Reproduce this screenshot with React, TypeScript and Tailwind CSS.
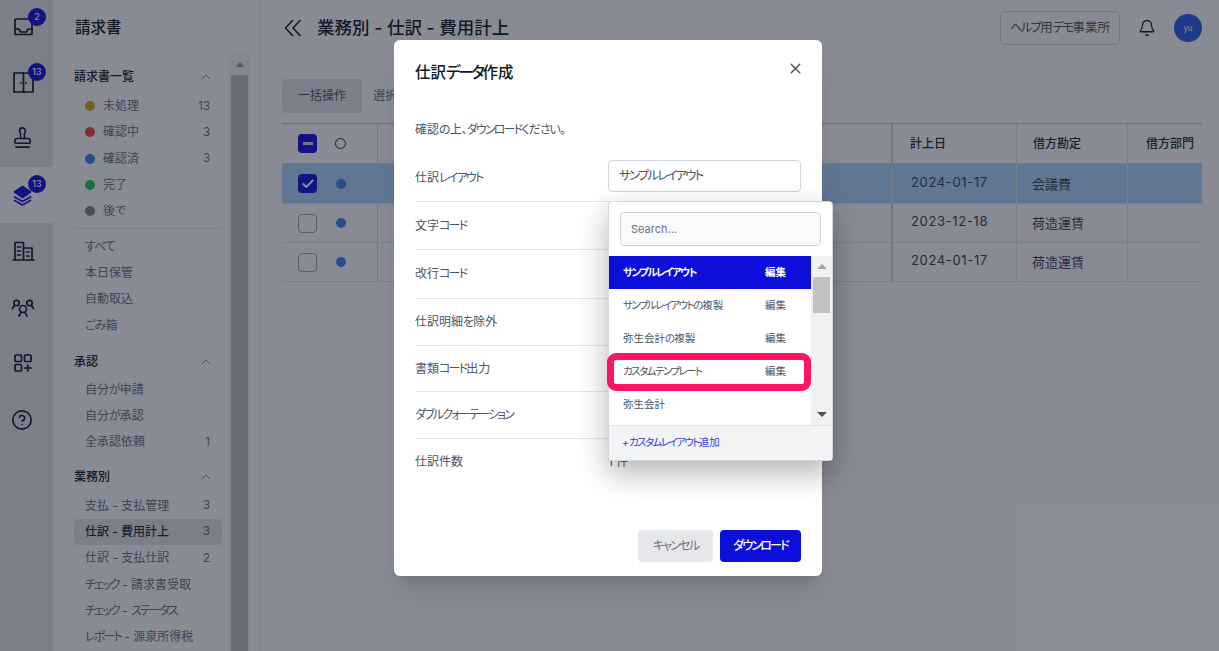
import React from "react";
import { Bell, ChevronUp, CircleHelp, Stamp, X, Check } from "lucide-react";

const T = ({ s }: { s: string }) => (
  <>
    {s.split(/([ァ-ヶー]+|[ぁ-ん、。]+)/).map((p, i) =>
      /^[ァ-ヶー]/.test(p) ? (
        <span key={i} className="tracking-[-0.15em]">{p}</span>
      ) : /^[ぁ-ん、。]/.test(p) ? (
        <span key={i} className="tracking-[-0.08em]">{p}</span>
      ) : (
        <span key={i}>{p}</span>
      )
    )}
  </>
);

const S = (p: { children: React.ReactNode; color?: string }) => (
  <svg width="24" height="24" viewBox="0 0 24 24" fill="none" stroke={p.color ?? "#111827"} strokeWidth="1.7" strokeLinejoin="round" strokeLinecap="round">{p.children}</svg>
);

const rail: { icon: React.ReactNode; badge?: string; active?: boolean; h: string }[] = [
  { h: "h-[55px]", badge: "2", icon: <S><rect x="4" y="3" width="17" height="15.500" rx="1" /><path d="M4 13h4l1.500 3h6l1.500-3h4" /></S> },
  { h: "h-14", badge: "13", icon: <S><rect x="3" y="2" width="19" height="19" /><path d="M12.500 2v19M10 11.500v.5M15 11.500v.5" /></S> },
  { h: "h-14", icon: <Stamp size={23} strokeWidth={1.7} color="#111827" className="-mt-[4px]" /> },
  { h: "h-14", badge: "13", active: true, icon: <S color="#0e0edb"><path d="M11.500 3.500l8 5.500-8 5.500-8-5.500z" fill="#0e0edb" /><path d="M3.500 14l8 4.500 8-4.500M3.500 17.500l8 4.500 8-4.500" /></S> },
  { h: "h-14", icon: <S><path d="M2 21h21M4 21V3.500h8.500V21M12.500 9H21V21M6.500 8h3M6.500 12h3M6.500 16h3M15.500 13h2.500M15.500 17h2.500" /></S> },
  { h: "h-14", icon: <S><circle cx="12" cy="14" r="3.500" /><path d="M8 21l2-3.500M16 21l-2-3.500" /><circle cx="5.500" cy="8" r="2.700" /><circle cx="18.500" cy="8" r="2.700" /><path d="M1.500 13.500l2-3M22.500 13.500l-2-3" /></S> },
  { h: "h-14", icon: <S><rect x="4" y="4" width="6.500" height="6.500" rx="1" /><rect x="13.500" y="4" width="6.500" height="6.500" rx="1" /><rect x="4" y="13.500" width="6.500" height="6.500" rx="1" /><path d="M13.500 17h6.500M16.750 14v6" /></S> },
  { h: "h-14", icon: <CircleHelp size={22} strokeWidth={1.8} color="#111827" className="mt-[2px]" /> },
];

type Item = { t: string; n?: string; dot?: string; active?: boolean };

function Row({ t, n, dot, active }: Item) {
  return (
    <div className={`flex h-[26.3px] items-center rounded pl-[11px] pr-[12px] text-[12px] ${active ? "bg-gray-200 font-medium text-gray-800" : "text-gray-500"}`}>
      {dot ? <span className={`mr-[8px] h-[10px] w-[10px] rounded-full ${dot}`} /> : null}
      <span className="flex-1 whitespace-nowrap"><T s={t} /></span>
      {n ? <span className="text-[11.500px] text-gray-500">{n}</span> : null}
    </div>
  );
}

function Head({ t, cls }: { t: string; cls: string }) {
  return (
    <div className={`flex h-[26px] items-center justify-between pr-[8px] text-[12px] font-medium text-gray-900 ${cls}`}>
      <span>{t}</span>
      <ChevronUp size={16} strokeWidth={1} color="#4b5563" />
    </div>
  );
}

const rows = [
  { sel: true, date: "2024-01-17", acc: "会議費" },
  { sel: false, date: "2023-12-18", acc: "荷造運賃" },
  { sel: false, date: "2024-01-17", acc: "荷造運賃" },
];

const tableCols = "grid grid-cols-[96px_515px_124px_111px_74px]";

const modalRows = [
  { t: "仕訳レイアウト", h: "h-[48px]" },
  { t: "文字コード", h: "h-[48px]" },
  { t: "改行コード", h: "h-[49px]" },
  { t: "仕訳明細を除外", h: "h-[47px]" },
  { t: "書類コード出力", h: "h-[46px]" },
  { t: "ダブルクォーテーション", h: "h-[47px]" },
];

const options = [
  { t: "サンプルレイアウト", e: true, sel: true },
  { t: "サンプルレイアウトの複製", e: true },
  { t: "弥生会計の複製", e: true },
  { t: "カスタムテンプレート", e: true },
  { t: "弥生会計", e: false },
];

export default function App() {
  return (
    <div className="relative flex h-screen w-full overflow-hidden bg-white font-['Inter','Noto_Sans_CJK_JP',sans-serif] text-gray-800 [font-feature-settings:'palt']">
      {/* icon rail */}
      <div className="w-[53px] shrink-0 bg-gray-200">
        {rail.map((r, i) => (
          <div key={i} className={`relative flex items-center pl-[11px] ${r.h} ${r.active ? "bg-white" : ""}`}>
            {r.icon}
            {r.badge ? (
              <span className="absolute left-[28px] top-[8px] flex h-[18px] w-[18px] items-center justify-center rounded-full bg-[#0e0edb] text-[9px] font-medium text-white">{r.badge}</span>
            ) : null}
          </div>
        ))}
      </div>

      {/* sidebar */}
      <div className="flex w-[208px] shrink-0 flex-col border-r border-gray-200 bg-white">
        <div className="flex h-[54px] shrink-0 items-center pl-[22px] pt-[2px] text-[15.500px] font-medium text-gray-900">請求書</div>
        <div className="flex min-h-0 flex-1">
          <div className="ml-[21px] w-[148px] shrink-0 pt-[10px]">
            <Head t="請求書一覧" cls="" />
            <div className="mt-[3px]">
              <Row t="未処理" n="13" dot="bg-[#d9a81f]" />
              <Row t="確認中" n="3" dot="bg-[#ef4444]" />
              <Row t="確認済" n="3" dot="bg-[#4080f0]" />
              <Row t="完了" dot="bg-[#22c55e]" />
              <Row t="後で" dot="bg-[#7b8290]" />
            </div>
            <div className="my-[4px] border-t border-gray-200" />
            <Row t="すべて" />
            <Row t="本日保管" />
            <Row t="自動取込" />
            <Row t="ごみ箱" />
            <Head t="承認" cls="mt-[10px]" />
            <div className="mt-[2px]">
              <Row t="自分が申請" />
              <Row t="自分が承認" />
              <Row t="全承認依頼" n="1" />
            </div>
            <Head t="業務別" cls="mt-[8px]" />
            <div className="mt-[3px]">
              <Row t="支払 - 支払管理" n="3" />
              <Row t="仕訳 - 費用計上" n="3" active />
              <Row t="仕訳 - 支払仕訳" n="2" />
              <Row t="チェック - 請求書受取" />
              <Row t="チェック - ステータス" />
              <Row t="レポート - 源泉所得税" />
            </div>
          </div>
          <div className="ml-[7px] flex w-[21px] shrink-0 flex-col items-center bg-[#f6f6f6]">
            <div className="flex h-[21px] w-full items-center justify-center">
              <span className="h-0 w-0 border-x-[5px] border-b-[5px] border-x-transparent border-b-[#a3a3a3]" />
            </div>
            <div className="w-[17px] flex-1 bg-[#c1c1c1]" />
          </div>
        </div>
      </div>

      {/* main */}
      <div className="min-w-0 flex-1 pl-[21px] pr-[17px]">
        <div className="flex h-[56px] items-center">
          <svg width="18" height="18" viewBox="0 0 18 18" fill="none" stroke="#111827" strokeWidth="1.500" className="ml-[2px] mr-[15px]">
            <path d="M9 1L1.500 9 9 17M16.500 1L9 9l7.500 8" />
          </svg>
          <span className="text-[17.500px] font-medium text-gray-900">業務別 - 仕訳 - 費用計上</span>
          <div className="ml-auto flex h-[34px] w-[120px] items-center justify-center rounded border border-gray-300 text-[12.500px] text-gray-600"><T s="ヘルプ用デモ事業所" /></div>
          <Bell size={18} strokeWidth={1.7} color="#111827" className="ml-[18px]" />
          <div className="ml-[18px] flex h-[28px] w-[28px] items-center justify-center rounded-full bg-[#2b5ced] text-[8px] text-white">yu</div>
        </div>
        <div className="mt-[23px] flex items-center">
          <div className="flex h-[34px] w-[80px] items-center justify-center rounded bg-gray-200 text-[12px] text-gray-600">一括操作</div>
          <span className="ml-[11px] text-[12px] text-gray-500">選択</span>
        </div>
        <div className="mt-[10px] border-t border-[#bfc3cb] text-[12px]">
          <div className={`${tableCols} h-[40px] border-b border-gray-300 font-medium text-gray-800`}>
            <div className="flex items-center border-r border-gray-300 pl-[16px]">
              <span className="flex h-[19px] w-[19px] items-center justify-center rounded bg-[#0e0edb]">
                <span className="h-[2.500px] w-[10px] bg-gray-300" />
              </span>
              <span className="ml-[18px] h-[11px] w-[11px] rounded-full border border-gray-800" />
            </div>
            <div className="border-r-2 border-gray-300" />
            <div className="flex items-center border-r border-gray-200 pl-[17px]">計上日</div>
            <div className="flex items-center border-r border-gray-200 pl-[16px]">借方勘定</div>
            <div className="flex items-center pl-[18px]">借方部門</div>
          </div>
          {rows.map((r, i) => (
            <div key={i} className={`${tableCols} ${i === 0 ? "h-[40px]" : "h-[39px]"} border-b border-gray-200 text-gray-800 ${r.sel ? "bg-[#aed7fe]" : ""}`}>
              <div className="flex items-center border-r border-gray-300 pl-[16px]">
                {r.sel ? (
                  <span className="flex h-[19px] w-[19px] items-center justify-center rounded bg-[#0e0edb]"><Check size={14} strokeWidth={3.500} color="#ffffff" /></span>
                ) : (
                  <span className="h-[19px] w-[19px] rounded border border-gray-400" />
                )}
                <span className="ml-[19px] h-[10px] w-[10px] rounded-full bg-[#4080f0]" />
              </div>
              <div className="border-r-2 border-gray-300" />
              <div className="flex items-center border-r border-gray-200 pb-[2px] pl-[18px] text-[13px] tracking-[0.05em] text-gray-700">{r.date}</div>
              <div className="flex items-center border-r border-gray-200 pl-[15px] pt-[2px] text-[13px] text-gray-700">{r.acc}</div>
              <div />
            </div>
          ))}
        </div>
      </div>

      {/* overlay */}
      <div className="absolute inset-0 bg-[#111827]/50" />

      {/* modal */}
      <div className="absolute left-[394px] top-[40px] flex h-[536px] w-[428px] flex-col rounded-md bg-white px-[21px] shadow-xl">
        <div className="mt-[22px] h-[22px] text-[15.500px] font-medium leading-[22px] text-gray-900"><T s="仕訳データ作成" /></div>
        <X size={17} strokeWidth={2} color="#4b5563" className="absolute right-[18px] top-[20px]" />
        <div className="mt-[36px] h-[20px] text-[12px] leading-[20px] text-gray-600"><T s="確認の上、ダウンロードください。" /></div>
        <div className="mt-[14px]">
          {modalRows.map((r, i) => (
            <div key={i} className={`flex items-center border-b border-gray-200 text-[12px] text-gray-600 ${r.h}`}>
              <span className="w-[193px]"><T s={r.t} /></span>
              {i === 0 ? (
                <div className="-mt-[3px] flex h-[32px] w-[193px] items-center rounded border border-gray-300 px-[10px] text-[12.500px] text-gray-600"><T s="サンプルレイアウト" /></div>
              ) : null}
            </div>
          ))}
          <div className="flex h-[45px] items-center text-[12px] text-gray-600">
            <span className="w-[193px]">仕訳件数</span>
            <span>1 件</span>
          </div>
        </div>
        <div className="mb-[14px] mt-auto flex justify-end gap-[7px]">
          <div className="flex h-[32px] w-[75px] items-center justify-center rounded bg-gray-200 text-[12px] text-gray-500"><T s="キャンセル" /></div>
          <div className="flex h-[32px] w-[81px] items-center justify-center rounded bg-[#0e0edb] text-[12px] font-medium text-white"><T s="ダウンロード" /></div>
        </div>

        {/* popover */}
        <div className="absolute left-[214px] top-[161px] flex h-[260px] w-[225px] flex-col rounded border border-gray-300 bg-white shadow-[0_12px_30px_rgba(0,0,0,0.3)]">
          <div className="mx-[11px] mt-[10px] flex h-[34px] items-center rounded border border-gray-300 bg-gray-50 px-[10px] text-[11px] text-gray-500">Search...</div>
          <div className="relative mt-[10px] flex h-[169px] shrink-0">
            <div className="w-[202px] shrink-0">
              {options.map((o, i) => (
                <div key={i} className={`flex h-[33px] items-center justify-between pl-[14px] pr-[25px] text-[10.500px] ${o.sel ? "bg-[#0e0edb] font-semibold text-white" : "text-gray-600"}`}>
                  <span><T s={o.t} /></span>
                  {o.e ? <span>編集</span> : null}
                </div>
              ))}
            </div>
            <div className="flex flex-1 flex-col items-center bg-[#f1f1f1]">
              <div className="flex h-[21px] w-full items-center justify-center">
                <span className="h-0 w-0 border-x-[5px] border-b-[5px] border-x-transparent border-b-[#a3a3a3]" />
              </div>
              <div className="h-[36px] w-[17px] bg-[#c1c1c1]" />
              <div className="mt-auto flex h-[21px] w-full items-center justify-center">
                <span className="h-0 w-0 border-x-[5px] border-t-[5px] border-x-transparent border-t-[#505050]" />
              </div>
            </div>
            <div className="absolute left-[-2px] top-[97px] h-[38px] w-[204px] rounded-[9px] border-[7px] border-[#ff1464]" />
          </div>
          <div className="flex flex-1 items-center border-t border-gray-200 bg-gray-100 pl-[13px] text-[10.500px] text-[#3a3ae2]">+<T s="カスタムレイアウト追加" /></div>
        </div>
      </div>
    </div>
  );
}
